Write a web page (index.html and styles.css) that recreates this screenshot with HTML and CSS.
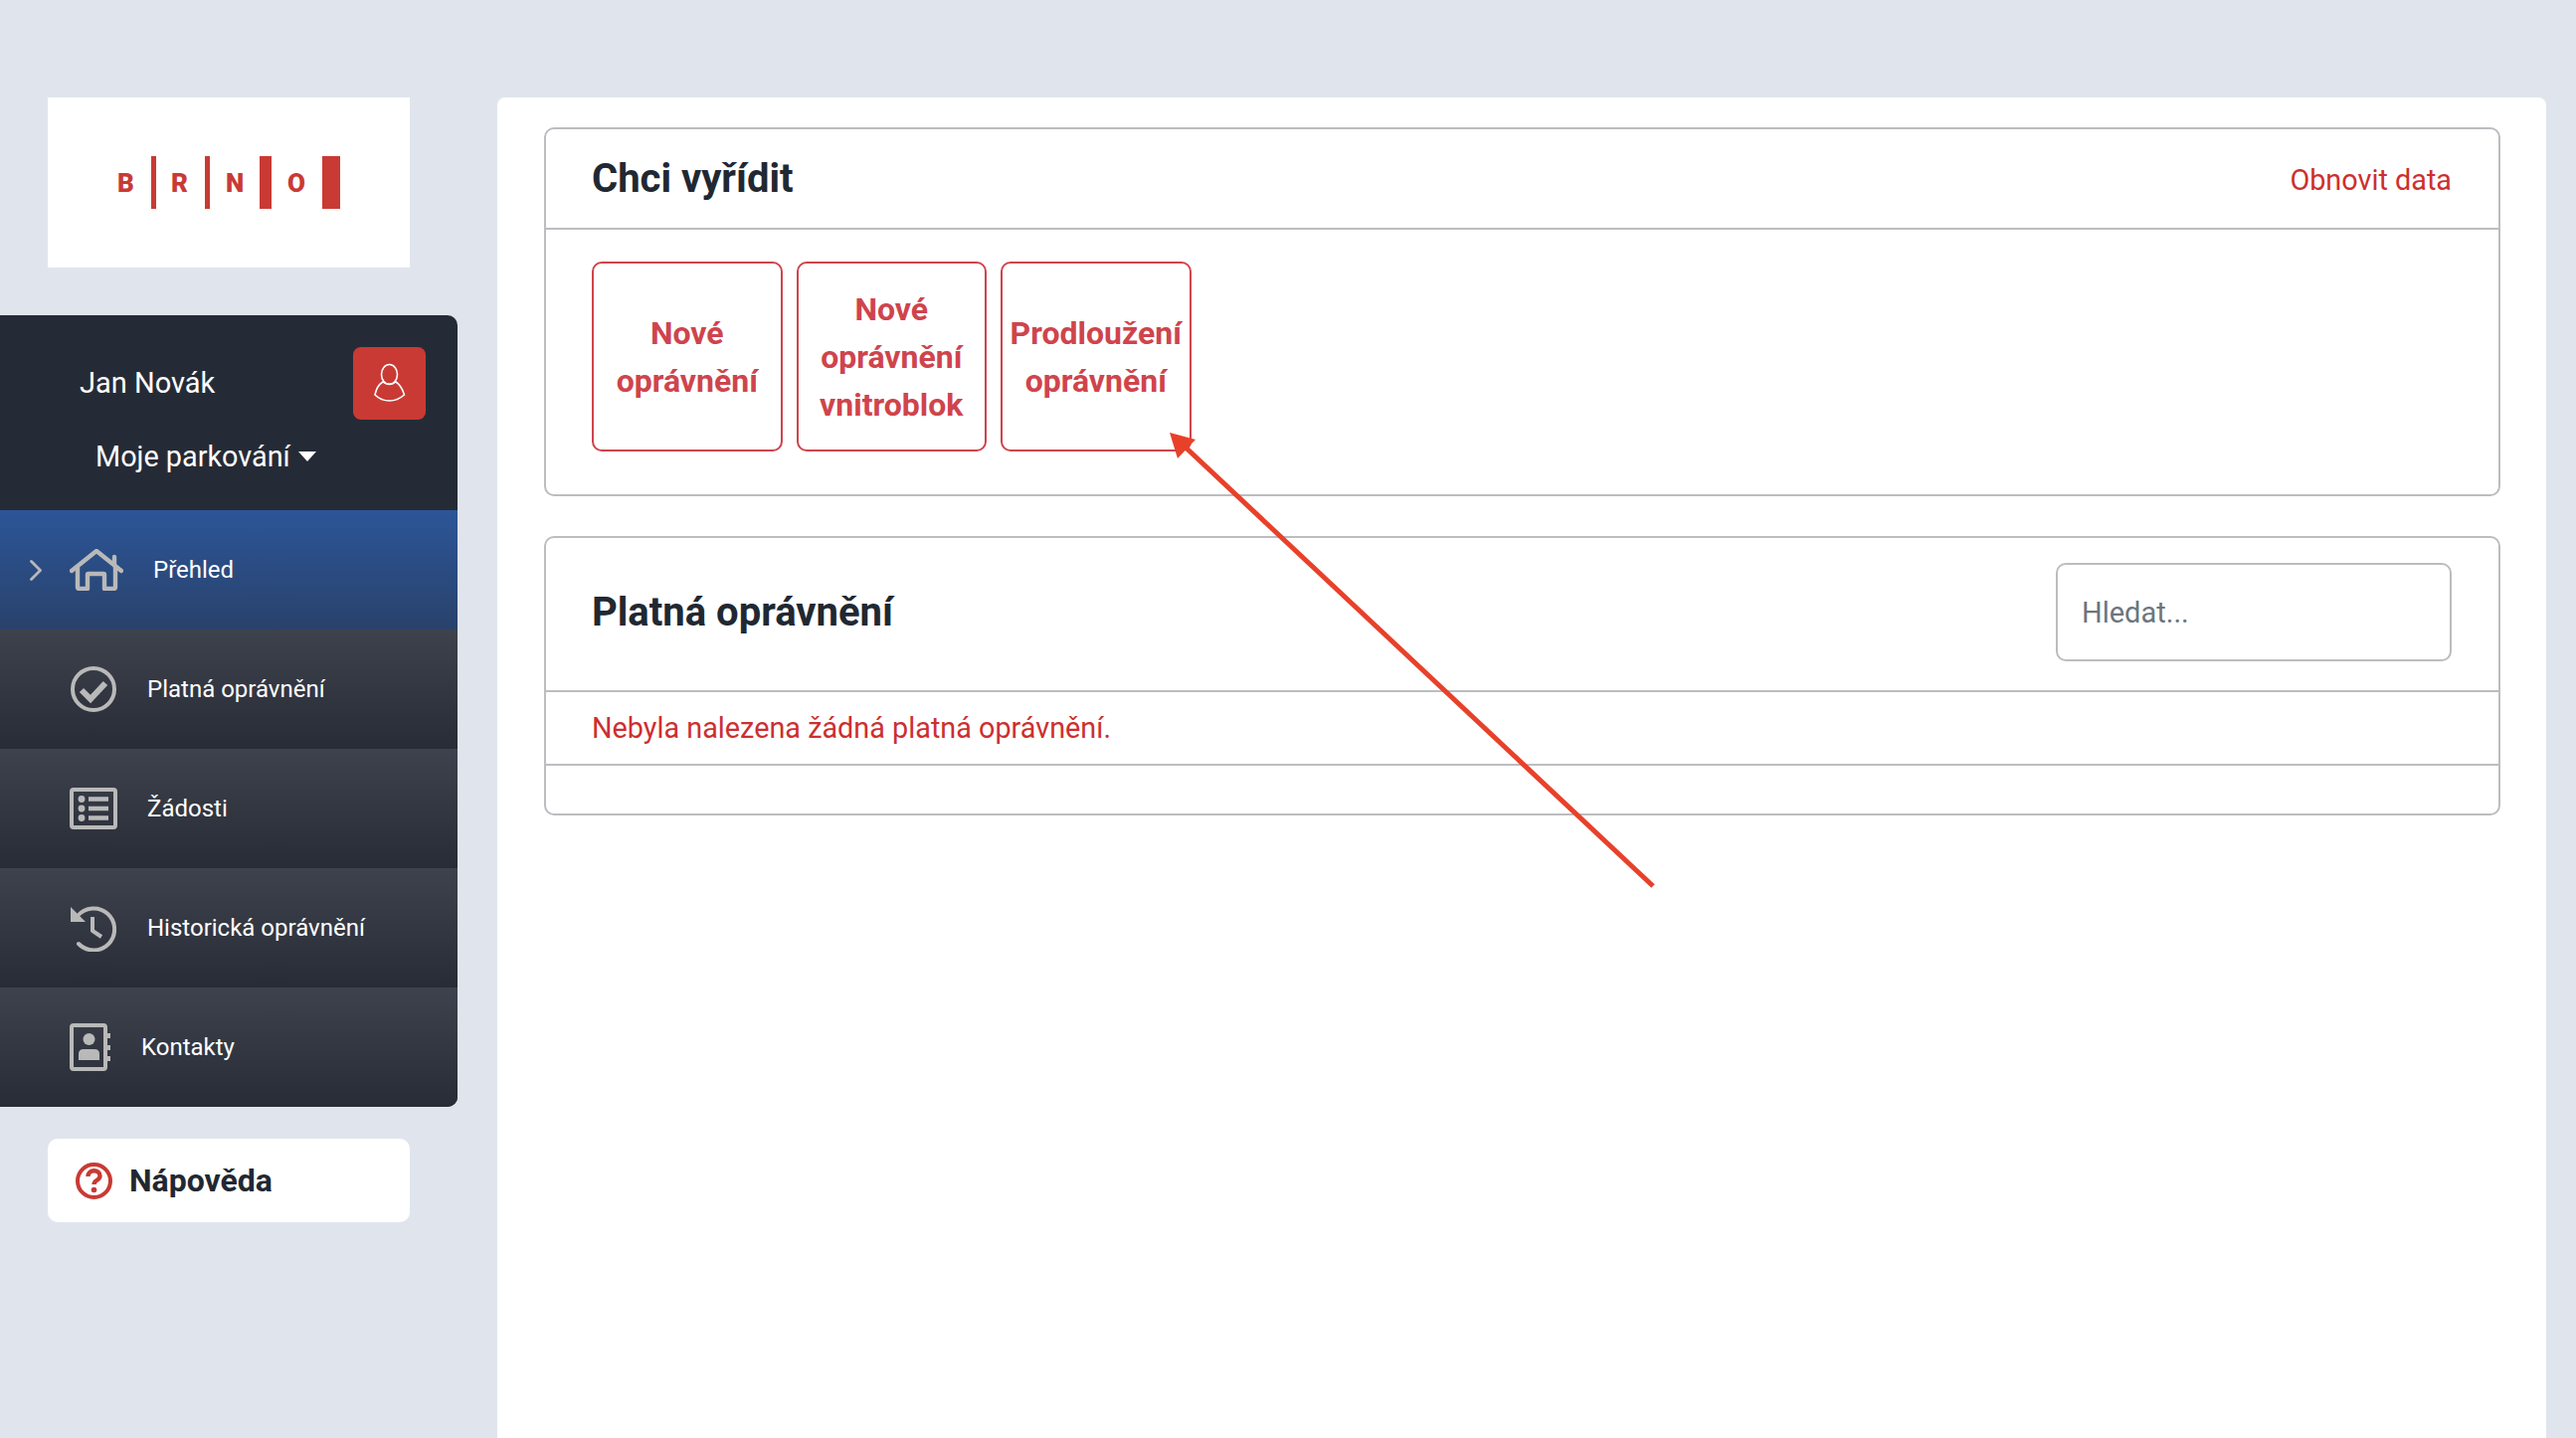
FILE: index.html
```html
<!DOCTYPE html>
<html lang="cs">
<head>
<meta charset="utf-8">
<title>Moje parkování</title>
<link rel="stylesheet" href="styles.css">
</head>
<body>
<div class="page">
  <aside class="sidebar">
    <div class="logo">
      <svg class="logo-svg" viewBox="0 0 364 171" width="364" height="171">
        <text class="logo-letter" x="70" y="95">B</text>
        <rect class="logo-bar" x="104" y="59" width="5" height="53"/>
        <text class="logo-letter" x="124" y="95">R</text>
        <rect class="logo-bar" x="158" y="59" width="5" height="53"/>
        <text class="logo-letter" x="179" y="95">N</text>
        <rect class="logo-bar" x="213" y="59" width="12" height="53"/>
        <text class="logo-letter" x="241" y="95">O</text>
        <rect class="logo-bar" x="276" y="59" width="18" height="53"/>
      </svg>
    </div>
    <nav class="panel">
      <div class="user">
        <div class="user-row">
          <span class="user-name">Jan Novák</span>
          <span class="user-btn">
            <svg viewBox="0 0 73 73" width="73" height="73" fill="none" stroke="#fff" stroke-width="1.6">
              <ellipse cx="36.5" cy="27.5" rx="8" ry="10"/>
              <path d="M30 35 C25 38 23 43 22 48 C26 52 31 54 36.5 54 C42 54 47 52 51.5 48 C50 43 48 38 43 35 C40 38 33 38 30 35 Z"/>
            </svg>
          </span>
        </div>
        <div class="dropdown">Moje parkování<span class="caret"></span></div>
      </div>
      <a class="nav-item nav-item--active">
        <svg class="chevron" viewBox="0 0 12 21" width="12" height="21" fill="none" stroke="#b9b9b9" stroke-width="2.8" stroke-linecap="round" stroke-linejoin="round"><path d="M1.5 1.5 L10.5 10.5 L1.5 19.5"/></svg>
        <span class="nav-icon nav-icon--home">
          <svg viewBox="0 0 54 42" width="54" height="42" fill="none" stroke="#b9b9b9" stroke-width="4.4" stroke-linecap="round" stroke-linejoin="round">
            <path d="M2 22 L27 2 L52 22"/>
            <path d="M45 16 V8"/>
            <path d="M8 18 V38 Q8 40 10 40 H18 V26 Q18 25 19 25 H34 Q35 25 35 26 V40 H44 Q46 40 46 38 V18"/>
          </svg>
        </span>
        <span class="nav-label">Přehled</span>
      </a>
      <a class="nav-item">
        <span class="nav-icon nav-icon--inset">
          <svg viewBox="0 0 46 46" width="46" height="46" fill="none" stroke="#b9b9b9">
            <circle cx="23" cy="23" r="21" stroke-width="4"/>
            <path d="M11 24 L20 33 L35 17" stroke-width="6"/>
          </svg>
        </span>
        <span class="nav-label">Platná oprávnění</span>
      </a>
      <a class="nav-item">
        <span class="nav-icon">
          <svg viewBox="0 0 48 42" width="48" height="42" fill="none" stroke="#b9b9b9">
            <rect x="2" y="2" width="44" height="38" rx="2" stroke-width="4"/>
            <circle cx="12" cy="11.5" r="3.4" fill="#b9b9b9" stroke="none"/>
            <circle cx="12" cy="21" r="3.4" fill="#b9b9b9" stroke="none"/>
            <circle cx="12" cy="30.5" r="3.4" fill="#b9b9b9" stroke="none"/>
            <path d="M19 11.5 H39 M19 21 H39 M19 30.5 H39" stroke-width="4.4"/>
          </svg>
        </span>
        <span class="nav-label">Žádosti</span>
      </a>
      <a class="nav-item">
        <span class="nav-icon nav-icon--inset">
          <svg viewBox="0 0 46 47" width="46" height="47" fill="none" stroke="#b9b9b9">
            <path d="M7 11 A21 21 0 1 1 8 39" stroke-width="4" stroke-linecap="round"/>
            <path d="M0 2 V17 H15 Z" fill="#b9b9b9" stroke="none"/>
            <path d="M22 12 V26 L31 32" stroke-width="4"/>
          </svg>
        </span>
        <span class="nav-label">Historická oprávnění</span>
      </a>
      <a class="nav-item">
        <span class="nav-icon nav-icon--contact">
          <svg viewBox="0 0 42 48" width="42" height="48" fill="none" stroke="#b9b9b9">
            <rect x="2" y="2" width="34" height="44" rx="2" stroke-width="4"/>
            <circle cx="19.5" cy="16" r="6" fill="#b9b9b9" stroke="none"/>
            <path d="M9 37 V31 Q9 26 14 26 H25 Q30 26 30 31 V37 Z" fill="#b9b9b9" stroke="none"/>
            <path d="M37 10 H41 V15 H37 Z M37 22 H41 V27 H37 Z M37 33 H41 V38 H37 Z" fill="#b9b9b9" stroke="none"/>
          </svg>
        </span>
        <span class="nav-label">Kontakty</span>
      </a>
    </nav>
    <div class="help">
      <svg viewBox="0 0 37 37" width="37" height="37" fill="none" stroke="#c93a34">
        <circle cx="18.5" cy="18.5" r="16.5" stroke-width="4"/>
        <path d="M12.5 14 C12.5 6.5 24.5 6.5 24.5 13.5 C24.5 18 18.5 17.5 18.5 22" stroke-width="4.4"/>
        <circle cx="18.5" cy="27.5" r="2.8" fill="#c93a34" stroke="none"/>
      </svg>
      <span class="help-label">Nápověda</span>
    </div>
  </aside>
  <main class="main">
    <section class="card">
      <header class="card-head card-head--small">
        <h2 class="card-title">Chci vyřídit</h2>
        <a class="refresh">Obnovit data</a>
      </header>
      <div class="card-body">
        <a class="tile">Nové oprávnění</a>
        <a class="tile">Nové oprávnění vnitroblok</a>
        <a class="tile">Prodloužení oprávnění</a>
      </div>
    </section>
    <section class="card card--second">
      <header class="card-head card-head--large">
        <h2 class="card-title">Platná oprávnění</h2>
        <input class="search" type="text" placeholder="Hledat...">
      </header>
      <div class="card-row">Nebyla nalezena žádná platná oprávnění.</div>
      <div class="card-foot"></div>
    </section>
  </main>
</div>
<svg class="arrow" viewBox="0 0 2590 1446" width="2590" height="1446">
  <path d="M1662 891 L1190 448" stroke="#e8412a" stroke-width="5" fill="none"/>
  <path d="M1176 435 L1202 442 L1184 461 Z" fill="#e8412a"/>
</svg>
</body>
</html>
```

FILE: styles.css
```css
* { box-sizing: border-box; }
html, body { margin: 0; padding: 0; height: 100%; }
body {
  background: #e0e5ed;
  font-family: Roboto, "Liberation Sans", sans-serif;
  color: #212832;
  overflow: hidden;
  position: relative;
}
.page { display: flex; align-items: stretch; padding-top: 98px; min-height: 100vh; }

.sidebar { width: 460px; flex: none; display: flex; flex-direction: column; }
.logo { margin-left: 48px; width: 364px; height: 171px; background: #fff; margin-bottom: 48px; }
.logo-svg { display: block; }
.logo-letter { font-family: Roboto, sans-serif; font-weight: 900; font-size: 26px; fill: #c93a34; }
.logo-bar { fill: #c93a34; }

.panel { background: #252b36; border-radius: 0 10px 10px 0; overflow: hidden; }
.user { height: 196px; padding: 32px 32px 0 80px; }
.user-row { display: flex; justify-content: space-between; align-items: center; }
.user-name { color: #fff; font-size: 29px; position: relative; top: -1px; }
.user-btn { width: 73px; height: 73px; background: #c93a34; border-radius: 8px; display: block; }
.user-btn svg { display: block; }
.dropdown { color: #fff; font-size: 28.8px; margin: 19px 0 0 16px; display: flex; align-items: center; line-height: 36px; }
.caret { margin-left: 8px; border: 10px solid transparent; border-top-color: #fff; border-bottom-width: 0; border-left-width: 9px; border-right-width: 9px; }

.nav-item {
  height: 120px; display: flex; align-items: center; padding-left: 70px;
  background: linear-gradient(#3e424c, #272c36);
  color: #fff;
}
.nav-item--active { padding-left: 30px; background: linear-gradient(#2c5598, #29426b); }
.chevron { margin-right: 28px; display: block; flex: none; }
.nav-icon { width: 78px; flex: none; display: flex; align-items: center; }
.nav-icon svg { display: block; }
.nav-icon--home { width: 84px; }
.nav-icon--inset { padding-left: 1px; }
.nav-icon--contact { width: 72px; }
.nav-label { font-size: 24px; }

.help {
  margin: 32px 0 0 48px; width: 364px; height: 84px; background: #fff; border-radius: 10px;
  display: flex; align-items: center; padding-left: 28px; gap: 17px;
}
.help svg { display: block; }
.help-label { font-size: 32px; font-weight: 700; color: #212832; }

.main {
  flex: 1; margin: 0 30px 0 40px; padding: 30px 46px 0 47px; background: #fff; border-radius: 8px 8px 0 0;
}
.card { border: 2px solid #bbbdc0; border-radius: 10px; }
.card--second { margin-top: 40px; }
.card-head {
  display: flex; justify-content: space-between; align-items: center;
  padding: 0 47px 0 46px; border-bottom: 2px solid #bbbdc0;
}
.card-head--small { height: 101px; }
.card-head--large { height: 155px; padding-bottom: 4px; }
.card-title { margin: 0; font-size: 40px; font-weight: 700; color: #212832; }
.refresh { color: #cd2f2f; font-size: 28.8px; padding-top: 2px; }
.card-body { display: flex; gap: 14px; padding: 32px 46px 43px; }
.tile {
  width: 191.5px; height: 191px; border: 2px solid #cf444c; border-radius: 10px;
  display: flex; align-items: center; justify-content: center; text-align: center;
  color: #cf444c; font-size: 32px; font-weight: 700; line-height: 48px;
}
.search {
  width: 398px; height: 99px; border: 2px solid #bbbdc0; border-radius: 10px; padding: 0 24px;
  font: 29px Roboto, sans-serif; color: #6c757d; background: #fff; outline: none;
}
.search::placeholder { color: #6c757d; opacity: 1; }
.card-row {
  height: 74px; display: flex; align-items: center; padding-left: 46px;
  font-size: 28.8px; color: #cd2f2f; border-bottom: 2px solid #bbbdc0;
}
.card-foot { height: 48px; }

.arrow { position: absolute; left: 0; top: 0; pointer-events: none; }
```
